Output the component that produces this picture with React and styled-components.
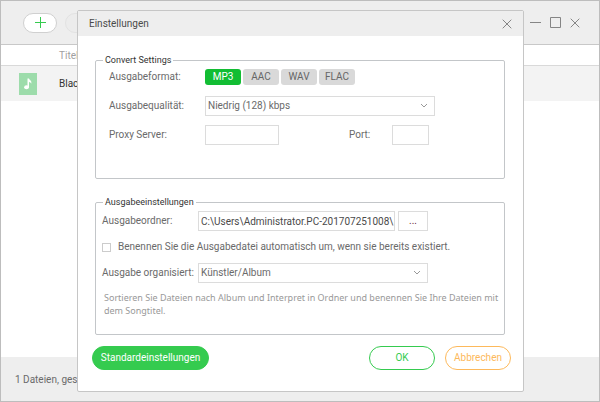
import React, { useState } from 'react';
import styled, { createGlobalStyle } from 'styled-components';

const GlobalStyle = createGlobalStyle`
  *, *::before, *::after {
    box-sizing: border-box;
  }

  body {
    margin: 0;
    background: #ffffff;
    color: #6a6a6a;
    font-family: Roboto, "Open Sans", sans-serif;
    font-size: 10px;
    line-height: 14px;
  }

  button, input, select {
    margin: 0;
    font: inherit;
    color: inherit;
  }
`;

const Window = styled.div`
  position: relative;
  display: flex;
  flex-direction: column;
  min-height: 100vh;
  border: 1px solid #bdbdbd;
  background: #ffffff;
`;

const Toolbar = styled.header`
  display: flex;
  justify-content: space-between;
  align-items: center;
  height: 44px;
  padding: 0 19px 0 22px;
  border-bottom: 1px solid #c8c8c8;
  background: #eeeeee;
`;

const ToolGroup = styled.div`
  display: flex;
  align-items: center;
  gap: ${({ $gap }) => $gap}px;
`;

const ToolButton = styled.button`
  display: flex;
  align-items: center;
  justify-content: center;
  width: 34px;
  height: 20px;
  padding: 0;
  border: 1px solid ${({ disabled }) => (disabled ? '#e2e2e2' : '#d0d0d0')};
  border-radius: 10px;
  background: ${({ disabled }) => (disabled ? '#ececec' : '#ffffff')};
`;

const IconButton = styled.button`
  display: flex;
  padding: 0;
  border: none;
  background: none;
  color: #858585;
  cursor: pointer;
`;

const TrackTable = styled.table`
  width: 100%;
  border-collapse: collapse;
  text-align: left;

  th, td {
    padding: 2px 0 0;
  }

  th {
    height: 20px;
    border-bottom: 1px solid #d9d9d9;
    color: #a0a0a0;
    font-weight: normal;
  }

  td {
    height: 36px;
    background: #f3f3f3;
    color: #333333;
  }

  .cover {
    width: 58px;
    padding-left: 18px;
  }

  svg {
    display: block;
  }
`;

const StatusBar = styled.footer`
  height: 44px;
  margin-top: auto;
  padding: 16px 14px;
  background: #eeeeee;
`;

const Overlay = styled.div`
  position: absolute;
  inset: 0;
  padding: 9px 75px 0 76px;
`;

const Dialog = styled.section`
  border: 1px solid #c6c6c6;
  border-radius: 2px;
  background: #ffffff;
`;

const DialogHeader = styled.div`
  display: flex;
  align-items: center;
  justify-content: space-between;
  height: 25px;
  padding: 0 11px;
  background: #eeeeee;
`;

const DialogTitle = styled.h1`
  margin: 0;
  color: #4a4a4a;
  font-size: 10px;
  font-weight: normal;
`;

const DialogBody = styled.form`
  padding: 17px 18px 0 17px;
`;

const Group = styled.fieldset`
  display: grid;
  gap: ${({ $gap }) => $gap}px;
  min-width: 0;
  margin: 0 0 16px;
  padding: ${({ $padding }) => $padding};
  border: 1px solid #c3c6c9;
  border-radius: 2px;
`;

const Legend = styled.legend`
  margin-left: ${({ $indent }) => $indent}px;
  padding: 0 2px;
  color: #333333;
  font-size: 9px;
`;

const Row = styled.div`
  display: flex;
  align-items: center;
  height: 20px;
`;

const Label = styled.label`
  flex: none;
  width: ${({ $width }) => $width}px;
  white-space: nowrap;
`;

const RowLabel = styled.span`
  flex: none;
  width: 96px;
`;

const Formats = styled.div`
  display: flex;
  gap: 2px;
`;

const FormatButton = styled.button`
  width: 36px;
  height: 16px;
  padding: 0;
  border: none;
  border-radius: 3px;
  background: ${({ $active }) => ($active ? '#12bd33' : '#d9d9d9')};
  color: ${({ $active }) => ($active ? '#ffffff' : '#666666')};
  line-height: 16px;
  cursor: pointer;
`;

const TextInput = styled.input`
  flex: none;
  width: ${({ $width }) => $width}px;
  height: 20px;
  padding: 0 0 0 2px;
  border: 1px solid #dcdcdc;
  background: #ffffff;
  color: #4a4a4a;
  outline: none;

  &:focus {
    border-color: #35cb4f;
  }
`;

const PortLabel = styled(Label)`
  margin-left: 70px;
`;

const SelectBox = styled.span`
  position: relative;
  flex: none;
  width: 230px;
  height: 20px;

  select {
    width: 100%;
    height: 20px;
    padding: 0 20px 0 2px;
    border: 1px solid #dcdcdc;
    border-radius: 0;
    background: #ffffff;
    appearance: none;
    outline: none;
  }

  svg {
    position: absolute;
    top: 7px;
    right: 7px;
    pointer-events: none;
  }
`;

const BrowseButton = styled.button`
  width: 30px;
  height: 20px;
  margin-left: 3px;
  padding: 0;
  border: 1px solid #dcdcdc;
  background: #ffffff;
  color: #6b2b3a;
  cursor: pointer;
`;

const Checkbox = styled.input`
  width: 9px;
  height: 9px;
  margin: 0 7px 0 0;
  border: 1px solid #cccccc;
  background: #ffffff;
  appearance: none;

  &:checked {
    background: #35cb4f;
  }
`;

const Hint = styled.p`
  margin: 2px 0 0;
  padding-left: 2px;
  color: #999999;
  font-family: "Noto Sans", sans-serif;
  font-size: 9px;
  line-height: 13px;
`;

const DialogFooter = styled.div`
  display: flex;
  gap: 10px;
  padding: 0 12px 21px 14px;
  margin-top: -5px;
`;

const PillButton = styled.button`
  width: ${({ $width }) => $width}px;
  height: 24px;
  padding: 0;
  border: 1px solid ${({ $color }) => $color};
  border-radius: 12px;
  background: ${({ $filled, $color }) => ($filled ? $color : '#ffffff')};
  color: ${({ $filled, $color }) => ($filled ? '#ffffff' : $color)};
  cursor: pointer;

  &:first-child {
    margin-right: auto;
  }
`;

const CloseIcon = () => (
  <svg width="10" height="10" viewBox="0 0 10 10" fill="none" stroke="currentColor">
    <path d="M.7.7l8.6 8.6M9.3.7L.7 9.3" />
  </svg>
);

const Chevron = () => (
  <svg width="8" height="6" viewBox="0 0 8 6" fill="none" stroke="#999999">
    <path d="M1 1l3 3 3-3" />
  </svg>
);

const SongIcon = () => (
  <svg width="18" height="22" viewBox="0 0 18 22">
    <path fill="#9ddcab" d="M0 0h18v22H0z" />
    <ellipse cx="7.5" cy="14.2" rx="2.4" ry="2" fill="#ffffff" />
    <path d="M8.500 5.500h1.500c.2 1.500 3.200 2 2.200 5.300-.4-1.200-1.200-1.700-2.200-1.900v5.300H8.500z" fill="#ffffff" />
  </svg>
);

const formats = ['MP3', 'AAC', 'WAV', 'FLAC'];

function App() {
  const [format, setFormat] = useState('MP3');

  return (
    <>
      <GlobalStyle />
      <Window>
        <Toolbar>
          <ToolGroup $gap={8}>
            <ToolButton type="button" aria-label="Hinzufügen">
              <svg width="11" height="11" viewBox="0 0 11 11" stroke="#35cb4f">
                <path d="M5.500 0v11M0 5.500h11" />
              </svg>
            </ToolButton>
            <ToolButton type="button" aria-label="Konvertieren" disabled />
          </ToolGroup>
          <ToolGroup $gap={9}>
            <IconButton type="button" aria-label="Minimieren">
              <svg width="11" height="11" viewBox="0 0 11 11" stroke="currentColor">
                <path d="M0 5.500h11" />
              </svg>
            </IconButton>
            <IconButton type="button" aria-label="Maximieren">
              <svg width="11" height="11" viewBox="0 0 11 11" fill="none" stroke="currentColor">
                <path d="M.5.5h10v10H.5z" />
              </svg>
            </IconButton>
            <IconButton type="button" aria-label="Fenster schließen">
              <CloseIcon />
            </IconButton>
          </ToolGroup>
        </Toolbar>
        <TrackTable>
          <thead>
            <tr>
              <th className="cover" aria-label="Cover" />
              <th>Titel</th>
            </tr>
          </thead>
          <tbody>
            <tr>
              <td className="cover"><SongIcon /></td>
              <td>Blac</td>
            </tr>
          </tbody>
        </TrackTable>
        <StatusBar>1 Dateien, ges</StatusBar>

        <Overlay>
          <Dialog role="dialog" aria-labelledby="dialog-title">
            <DialogHeader>
              <DialogTitle id="dialog-title">Einstellungen</DialogTitle>
              <IconButton type="button" aria-label="Schließen"><CloseIcon /></IconButton>
            </DialogHeader>
            <DialogBody id="settings" onSubmit={(e) => e.preventDefault()}>
              <Group $gap={9} $padding="0 13px 33px">
                <Legend $indent={-6}>Convert Settings</Legend>
                <Row>
                  <RowLabel>Ausgabeformat:</RowLabel>
                  <Formats>
                    {formats.map((name) => (
                      <FormatButton
                        type="button"
                        key={name}
                        $active={name === format}
                        onClick={() => setFormat(name)}
                      >
                        {name}
                      </FormatButton>
                    ))}
                  </Formats>
                </Row>
                <Row>
                  <Label htmlFor="quality" $width={96}>Ausgabequalität:</Label>
                  <SelectBox>
                    <select id="quality">
                      <option>Niedrig (128) kbps</option>
                    </select>
                    <Chevron />
                  </SelectBox>
                </Row>
                <Row>
                  <Label htmlFor="proxy" $width={96}>Proxy Server:</Label>
                  <TextInput id="proxy" type="text" $width={74} />
                  <PortLabel htmlFor="port" $width={43}>Port:</PortLabel>
                  <TextInput id="port" type="text" $width={37} />
                </Row>
              </Group>
              <Group $gap={6} $padding="2px 2px 17px 6px">
                <Legend $indent={1}>Ausgabeeinstellungen</Legend>
                <Row>
                  <Label htmlFor="folder" $width={96}>Ausgabeordner:</Label>
                  <TextInput
                    id="folder"
                    type="text"
                    $width={197}
                    defaultValue="C:\Users\Administrator.PC-201707251008\"
                  />
                  <BrowseButton type="button">...</BrowseButton>
                </Row>
                <Row>
                  <Checkbox id="rename" type="checkbox" />
                  <label htmlFor="rename">
                    Benennen Sie die Ausgabedatei automatisch um, wenn sie bereits existiert.
                  </label>
                </Row>
                <Row>
                  <Label htmlFor="organize" $width={96}>Ausgabe organisiert:</Label>
                  <SelectBox>
                    <select id="organize">
                      <option>Künstler/Album</option>
                    </select>
                    <Chevron />
                  </SelectBox>
                </Row>
                <Hint>
                  Sortieren Sie Dateien nach Album und Interpret in Ordner und benennen Sie Ihre
                  Dateien mit dem Songtitel.
                </Hint>
              </Group>
            </DialogBody>
            <DialogFooter>
              <PillButton type="button" $width={117} $color="#35cb4f" $filled>
                Standardeinstellungen
              </PillButton>
              <PillButton type="submit" form="settings" $width={66} $color="#35cb4f">OK</PillButton>
              <PillButton type="button" $width={66} $color="#fdb95b">Abbrechen</PillButton>
            </DialogFooter>
          </Dialog>
        </Overlay>
      </Window>
    </>
  );
}

export default App;
